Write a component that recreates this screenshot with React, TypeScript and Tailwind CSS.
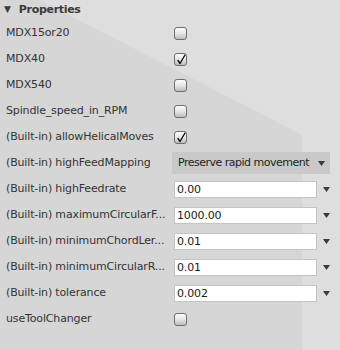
type Row =
  | { label: string; kind: "check"; checked?: boolean }
  | { label: string; kind: "input"; value: string }
  | { label: string; kind: "select"; value: string };

const rows: Row[] = [
  { label: "MDX15or20", kind: "check" },
  { label: "MDX40", kind: "check", checked: true },
  { label: "MDX540", kind: "check" },
  { label: "Spindle_speed_in_RPM", kind: "check" },
  { label: "(Built-in) allowHelicalMoves", kind: "check", checked: true },
  { label: "(Built-in) highFeedMapping", kind: "select", value: "Preserve rapid movement" },
  { label: "(Built-in) highFeedrate", kind: "input", value: "0.00" },
  { label: "(Built-in) maximumCircularF...", kind: "input", value: "1000.00" },
  { label: "(Built-in) minimumChordLer...", kind: "input", value: "0.01" },
  { label: "(Built-in) minimumCircularR...", kind: "input", value: "0.01" },
  { label: "(Built-in) tolerance", kind: "input", value: "0.002" },
  { label: "useToolChanger", kind: "check" },
];

function Arrow() {
  return (
    <svg width="7" height="5" viewBox="0 0 7 5" className="shrink-0">
      <path d="M0 0h7L3.5 5z" fill="#3a3a3a" />
    </svg>
  );
}

function Check({ checked }: { checked?: boolean }) {
  return (
    <div className="relative w-[13px] h-[13px] rounded-[3px] border border-[#6e6e6e] bg-gradient-to-b from-[#fbfbfb] via-[#e6e6e6] to-[#bdbdbd]">
      {checked && (
        <svg width="11" height="11" viewBox="0 0 11 11" className="absolute left-[1px] top-0">
          <path d="M2 6.5l2 3L9 1" fill="none" stroke="#111" strokeWidth="1.4" strokeLinecap="round" strokeLinejoin="round" />
        </svg>
      )}
    </div>
  );
}

function Control({ row }: { row: Row }) {
  if (row.kind === "check") return <Check checked={row.checked} />;
  if (row.kind === "select")
    return (
      <div className="ml-[-2px] flex items-center w-[158px] h-[22px] bg-[#c9c9c9] pl-[6px] pr-[5px]">
        <span className="flex-1 whitespace-nowrap tracking-[-0.5px] text-[#222]">{row.value}</span>
        <Arrow />
      </div>
    );
  return (
    <div className="flex items-center gap-[6px]">
      <div className="w-[143px] h-[17px] bg-white border border-[#c4c4c4] pl-[2px] leading-[15px] text-[#1a1a1a]">
        {row.value}
      </div>
      <Arrow />
    </div>
  );
}

export default function App() {
  return (
    <div
      className="relative w-[340px] h-[350px] overflow-hidden bg-[#dedede] text-[11px] tracking-[-0.15px] text-[#333]"
      style={{ fontFamily: '"DejaVu Sans", "Liberation Sans", sans-serif' }}
    >
      <div className="absolute inset-0 bg-[#d6d6d6] [clip-path:polygon(0_0,40px_0,302px_135px,302px_100%,0_100%)]" />
      <div className="relative">
        <div className="h-5 flex items-center pl-[4px] gap-[8px] font-bold text-[#3a3a3a]">
          <span className="text-[9px]">▼</span>
          <span className="tracking-[-0.3px]">Properties</span>
        </div>
        {rows.map((r) => (
          <div key={r.label} className="h-[26px] flex items-center">
            <div className="w-[174px] pl-[6px] whitespace-nowrap overflow-hidden">{r.label}</div>
            <Control row={r} />
          </div>
        ))}
      </div>
    </div>
  );
}
